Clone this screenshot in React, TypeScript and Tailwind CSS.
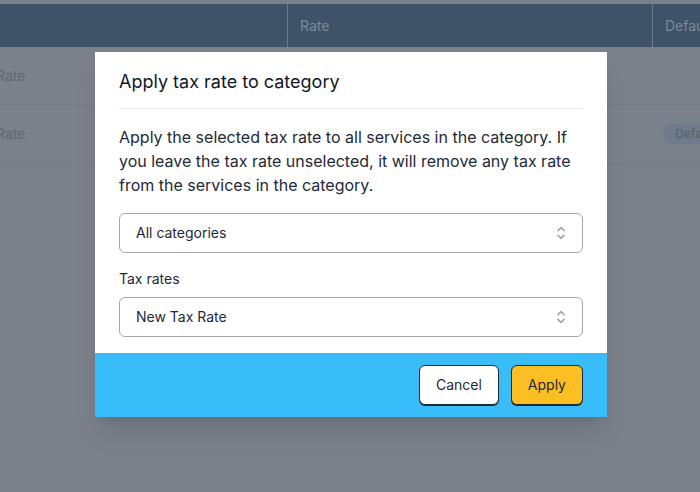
function Select({ value }: { value: string }) {
  return (
    <div className="flex h-10 items-center justify-between rounded-md border border-[#a3a8b3] bg-white pl-4 pr-3 text-sm text-[#1f2937]">
      <span>{value}</span>
      <svg viewBox="0 0 20 20" className="h-[18px] w-[18px] text-[#9ca3af]" fill="none" stroke="currentColor" strokeWidth={1.8} strokeLinecap="round" strokeLinejoin="round">
        <path d="M6.5 7.5 10 4l3.5 3.5M6.5 12.5 10 16l3.5-3.5" />
      </svg>
    </div>
  );
}

export default function App() {
  return (
    <div className="relative h-[492px] w-[700px] overflow-hidden bg-[#7b818b] font-['Inter',sans-serif]">
      {/* table behind the overlay */}
      <div className="pt-1">
        <div className="grid h-[43px] grid-cols-[287px_365px_1fr] bg-[#3e5367] text-sm text-[#7c8a99]">
          <div />
          <div className="flex items-center border-l border-[#6d7c8c] pl-3">Rate</div>
          <div className="flex items-center border-l border-[#6d7c8c] pl-3">Default</div>
        </div>
        <div className="flex h-[58px] items-center border-b border-[#737a85] text-sm text-[#5f6670]">
          <span className="-ml-1">Rate</span>
        </div>
        <div className="flex h-[58px] items-center justify-between border-b border-[#737a85] text-sm text-[#5f6670]">
          <span className="-ml-1">Rate</span>
          <span className="-mr-[28px] rounded-full bg-[#6f7b8c] px-3 py-0.5 text-xs text-[#555d68]">Default</span>
        </div>
      </div>

      {/* modal */}
      <div className="absolute left-[95px] top-[52px] w-[512px] overflow-hidden bg-white shadow-xl">
        <div className="px-6 pt-4 pb-4">
          <h2 className="pb-3 text-lg font-normal text-[#111827]">Apply tax rate to category</h2>
          <div className="border-t border-[#e5e7eb]" />
          <p className="mt-4 text-base leading-6 text-[#1f2937]">
            Apply the selected tax rate to all services in the category. If you leave the tax rate unselected, it will remove any tax rate from the services in the category.
          </p>
          <div className="mt-4">
            <Select value="All categories" />
          </div>
          <label className="mt-4 block text-sm text-[#1f2937]">Tax rates</label>
          <div className="mt-2">
            <Select value="New Tax Rate" />
          </div>
        </div>
        <div className="flex h-16 items-center justify-end gap-3 bg-[#38bdf8] px-6">
          <button className="h-10 rounded-md border border-[#1f2937] bg-white px-4 text-sm text-[#1f2937] shadow-[0_1px_0_#1f2937]">Cancel</button>
          <button className="h-10 rounded-md border border-[#1f2937] bg-[#fbbf24] px-4 text-sm text-[#1f2937] shadow-[0_1px_0_#1f2937]">Apply</button>
        </div>
      </div>
    </div>
  );
}
